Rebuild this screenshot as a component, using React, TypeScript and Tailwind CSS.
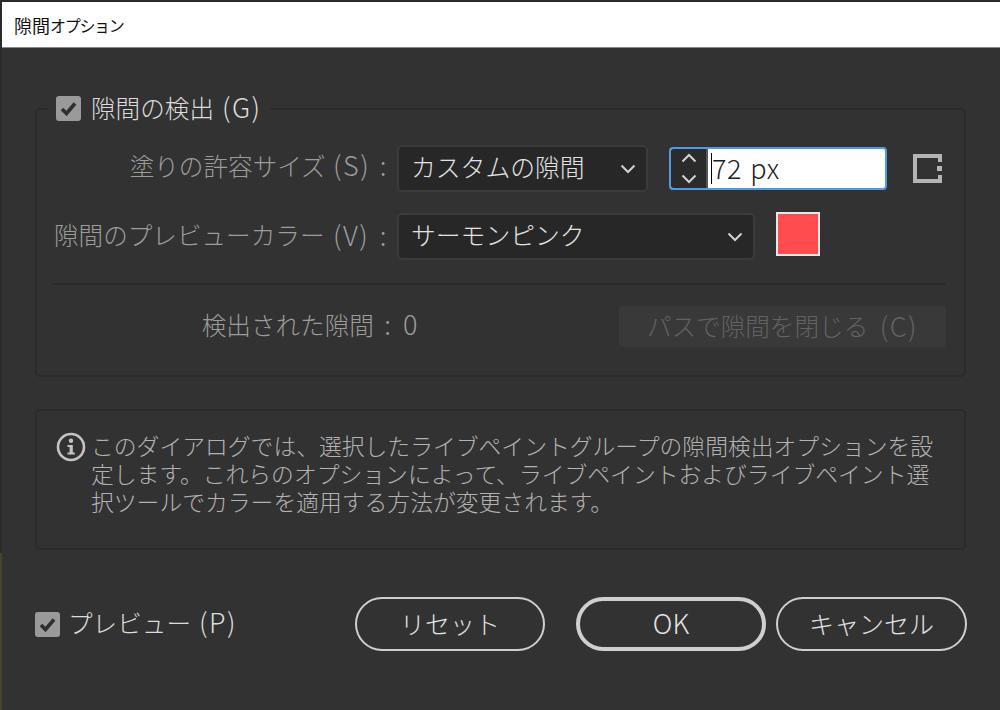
import React from "react";

// latin runs are drawn a bit larger than the kana in the reference
const L = ({ children }: { children: React.ReactNode }) => (
  <span className="text-[27px] leading-none tracking-[1.5px]">{children}</span>
);

const Chevron = ({ up = false }: { up?: boolean }) => (
  <svg width="16" height="10" viewBox="0 0 16 10" fill="none" className="shrink-0">
    <path
      d={up ? "M1.5 8.5 L8 2 L14.5 8.5" : "M1.5 1.5 L8 8 L14.5 1.5"}
      stroke="#d2d2d2"
      strokeWidth="2"
    />
  </svg>
);

const CheckBox = () => (
  <div className="flex h-[25px] w-[25px] shrink-0 items-center justify-center rounded-[3px] bg-[#9a9a9a]">
    <svg width="17" height="15" viewBox="0 0 17 15" fill="none">
      <path d="M2 8 L6.5 12.5 L15 2.5" stroke="#2f2f2f" strokeWidth="3.6" />
    </svg>
  </div>
);

const Select = ({ text, width }: { text: string; width: string }) => (
  <div
    className={`flex h-[47px] items-center justify-between rounded-[5px] border-2 border-[#3b3b3b] bg-[#272727] pl-[12px] pr-[10px] text-[24.8px] text-[#e2e2e2] ${width}`}
  >
    <span className="pb-[4px]">{text}</span>
    <Chevron />
  </div>
);

const PillButton = ({ children, width, primary = false }: { children: React.ReactNode; width: string; primary?: boolean }) => (
  <button
    className={`flex h-[54px] items-center justify-center rounded-full border-[#cfcfcf] text-[25px] text-[#e2e2e2] ${width} ${primary ? "border-[4px]" : "border-2"}`}
  >
    {children}
  </button>
);

const InfoIcon = () => (
  <svg width="30" height="30" viewBox="0 0 30 30" fill="none" className="shrink-0">
    <circle cx="15" cy="15" r="13" stroke="#c4c4c4" strokeWidth="2.6" />
    <circle cx="15" cy="8.8" r="2.2" fill="#c4c4c4" />
    <path d="M11.5 13 H16.8 V20.6 H18.8 V22.6 H11.5 V20.6 H13.6 V15 H11.5 Z" fill="#c4c4c4" />
  </svg>
);

export default function App() {
  return (
    <div
      className="flex h-[710px] w-[1000px] overflow-hidden bg-[#323232] font-light"
      style={{ fontFamily: '"Noto Sans CJK JP", sans-serif' }}
    >
      <div className="flex w-[2px] shrink-0 flex-col">
        <div className="h-[553px] bg-[#2a2a2a]" />
        <div className="flex-1 bg-[#47432f]" />
      </div>

      <div className="flex min-w-0 flex-1 flex-col">
        <div className="h-[2px] bg-[#2a2a2a]" />
        <div className="flex h-[46px] items-center border-b border-[#8a8a8a] bg-white pl-[12px] text-[18px] font-normal leading-none text-[#111]">
          隙間<span className="text-[16px] tracking-[-1.3px]">オプション</span>
        </div>

        <div className="flex flex-1 flex-col pl-[33px] pr-[34px] pt-[60px]">
          {/* gap detection group */}
          <div className="relative h-[269px] rounded-[5px] border-2 border-[#2b2b2b] pl-[15px] pr-[18px] pt-[35px]">
            <div className="absolute left-[11px] top-[-17px] flex h-[30px] items-center gap-[10px] whitespace-nowrap bg-[#323232] pl-[8px] pr-[8px] text-[24.6px] leading-none text-[#dcdcdc]">
              <CheckBox />
              <span className="pb-[4px] [word-spacing:2.5px]">
                隙間の検出 <L>(G)</L>
              </span>
            </div>

            <div className="flex items-center">
              <div className="w-[345px] whitespace-pre pb-[6px] pr-[9px] text-right text-[24.6px] text-[#9c9c9c] [word-spacing:2px]">
                塗りの許容サイズ <L>(S) :</L>
              </div>
              <Select text="カスタムの隙間" width="w-[251px]" />
              <div className="ml-[21px] flex h-[43px] w-[218px] overflow-hidden rounded-[4px] border-2 border-[#4b9be6] bg-white">
                <div className="flex w-[37px] flex-col items-center justify-center gap-[11px] border-r-2 border-[#555] bg-[#2b2b2b]">
                  <Chevron up />
                  <Chevron />
                </div>
                <div className="flex flex-1 items-center pl-[3px] text-[27px] tracking-[0.5px] text-[#222] [word-spacing:2px]">
                  <span className="h-[31px] w-px shrink-0 bg-black" />
                  <span>72 px</span>
                </div>
              </div>
              <svg width="30" height="30" viewBox="0 0 30 30" fill="none" className="ml-[26px]">
                <path d="M27 8 V2 H2 V27 H27 V21" stroke="#b4b4b4" strokeWidth="4" />
                <rect x="24" y="12" width="5" height="5" fill="#b4b4b4" />
              </svg>
            </div>

            <div className="mt-[21px] flex items-start">
              <div className="flex h-[47px] w-[345px] items-center justify-end whitespace-pre pb-[4px] pr-[9px] text-[24.6px] text-[#9c9c9c] [word-spacing:3px]">
                隙間のプレビューカラー <L>(V) :</L>
              </div>
              <Select text="サーモンピンク" width="w-[358px]" />
              <div className="-mt-px ml-[21px] h-[44px] w-[44px] border-2 border-[#e8e8e8] bg-[#ff4c4f]" />
            </div>

            <div className="mt-[23px] h-[2px] bg-[#2b2b2b]" />

            <div className="mt-[21px] flex items-center">
              <div className="w-[367px] whitespace-pre pb-[4px] text-right text-[24.6px] text-[#9c9c9c] [word-spacing:3px]">
                検出された隙間<L> : 0</L>
              </div>
              <div className="ml-[200px] flex h-[41px] flex-1 items-center justify-center whitespace-pre rounded-[3px] bg-[#393939] pb-[3px] text-[24.6px] text-[#626262] [word-spacing:6px]">
                パスで隙間を閉じる <L>(C)</L>
              </div>
            </div>
          </div>

          {/* info box */}
          <div className="mt-[32px] flex h-[141px] gap-[5px] rounded-[5px] border-2 border-[#2b2b2b] pl-[19px] pr-[24px] pt-[21px]">
            <InfoIcon />
            <p className="text-[22.8px] leading-[28px] text-[#b2b2b2]">
              このダイアログでは、選択したライブペイントグループの隙間検出オプションを設定します。これらのオプションによって、ライブペイントおよびライブペイント選択ツールでカラーを適用する方法が変更されます。
            </p>
          </div>

          {/* footer */}
          <div className="-mr-px mt-[47px] flex items-center">
            <CheckBox />
            <span className="ml-[8px] whitespace-pre pb-[4px] text-[24.6px] text-[#dcdcdc] [word-spacing:2.5px]">
              プレビュー <L>(P)</L>
            </span>
            <div className="ml-auto flex items-center">
              <PillButton width="w-[190px]">リセット</PillButton>
              <PillButton width="w-[190px] ml-[31px] pb-[2px] text-[27px]" primary>
                OK
              </PillButton>
              <PillButton width="w-[191px] ml-[10px]">キャンセル</PillButton>
            </div>
          </div>
        </div>
      </div>
    </div>
  );
}
